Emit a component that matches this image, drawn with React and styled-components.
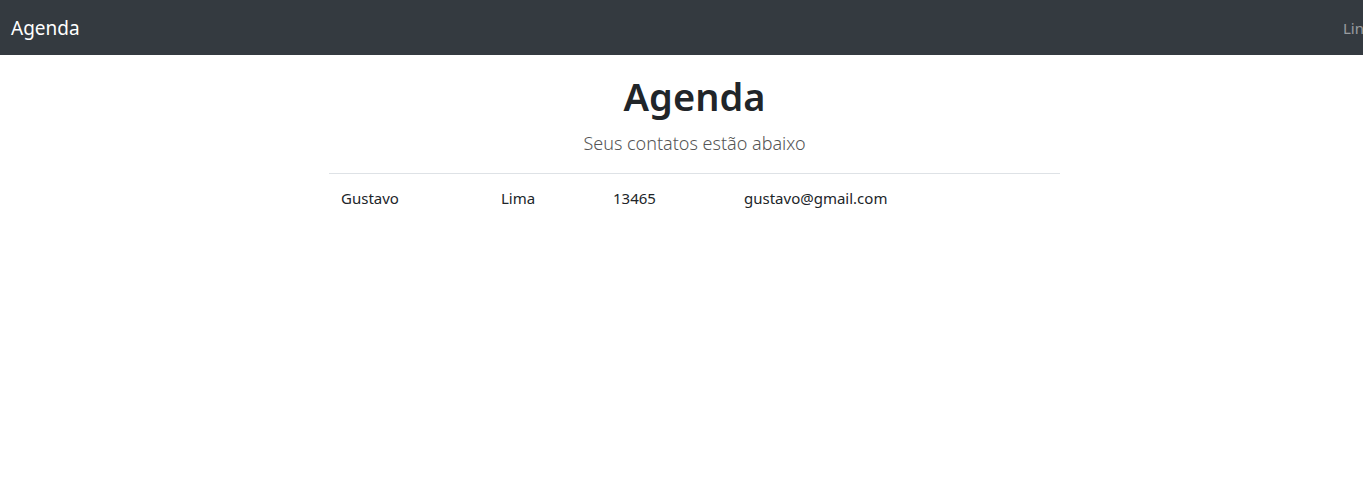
import React from 'react'
import styled, { createGlobalStyle } from 'styled-components'

const contacts = [
    { nome: 'Gustavo', sobrenome: 'Lima', telefone: '13465', email: 'gustavo@gmail.com' },
]

const App = () => {
  return (
    <>
      <GlobalStyle />
      <Navbar>
        <Brand>Agenda</Brand>
        <NavLink>Link</NavLink>
      </Navbar>
      <Main>
        <Title>Agenda</Title>
        <Lead>Seus contatos estão abaixo</Lead>
        <Table>
          <colgroup>
            <col style={{ width: '160px' }} />
            <col style={{ width: '112px' }} />
            <col style={{ width: '131px' }} />
            <col />
          </colgroup>
          <tbody>
            {contacts.map((c) => (
              <tr key={c.email}>
                <Cell>{c.nome}</Cell>
                <Cell>{c.sobrenome}</Cell>
                <Cell>{c.telefone}</Cell>
                <Cell>{c.email}</Cell>
              </tr>
            ))}
          </tbody>
        </Table>
      </Main>
    </>
  )
}

export default App

const GlobalStyle = createGlobalStyle`
    body {
        margin: 0;
        background: #fff;
        color: #212529;
        font-family: "Noto Sans", "Open Sans", sans-serif;
        font-size: 16px;
        line-height: 1.5;
        overflow: hidden;
    }
`
const Navbar = styled.nav`
    display: flex;
    align-items: center;
    justify-content: space-between;
    height: 55px;
    box-sizing: border-box;
    padding: 0 0 0 11px;
    background-color: #343a40;
    overflow: hidden;
`
const Brand = styled.a`
    color: #fff;
    font-size: 19px;
    line-height: 30px;
`
const NavLink = styled.a`
    color: rgba(255, 255, 255, 0.5);
    font-size: 15px;
    margin-right: -9px;
    padding-top: 1px;
`
const Main = styled.main`
    padding: 0 303px 0 329px;
    display: flex;
    flex-direction: column;
    align-items: center;
`
const Title = styled.h1`
    margin: 19px 0 0;
    font-size: 38px;
    font-weight: 600;
    line-height: 1.2;
`
const Lead = styled.p`
    margin: 10px 0 16px;
    font-size: 18px;
    font-weight: 300;
    color: #555;
    line-height: 1.5;
`
const Table = styled.table`
    width: 100%;
    border-collapse: collapse;
    table-layout: fixed;
`
const Cell = styled.td`
    padding: 12px;
    border-top: 1px solid #dee2e6;
    font-size: 15px;
    line-height: 24px;
`
